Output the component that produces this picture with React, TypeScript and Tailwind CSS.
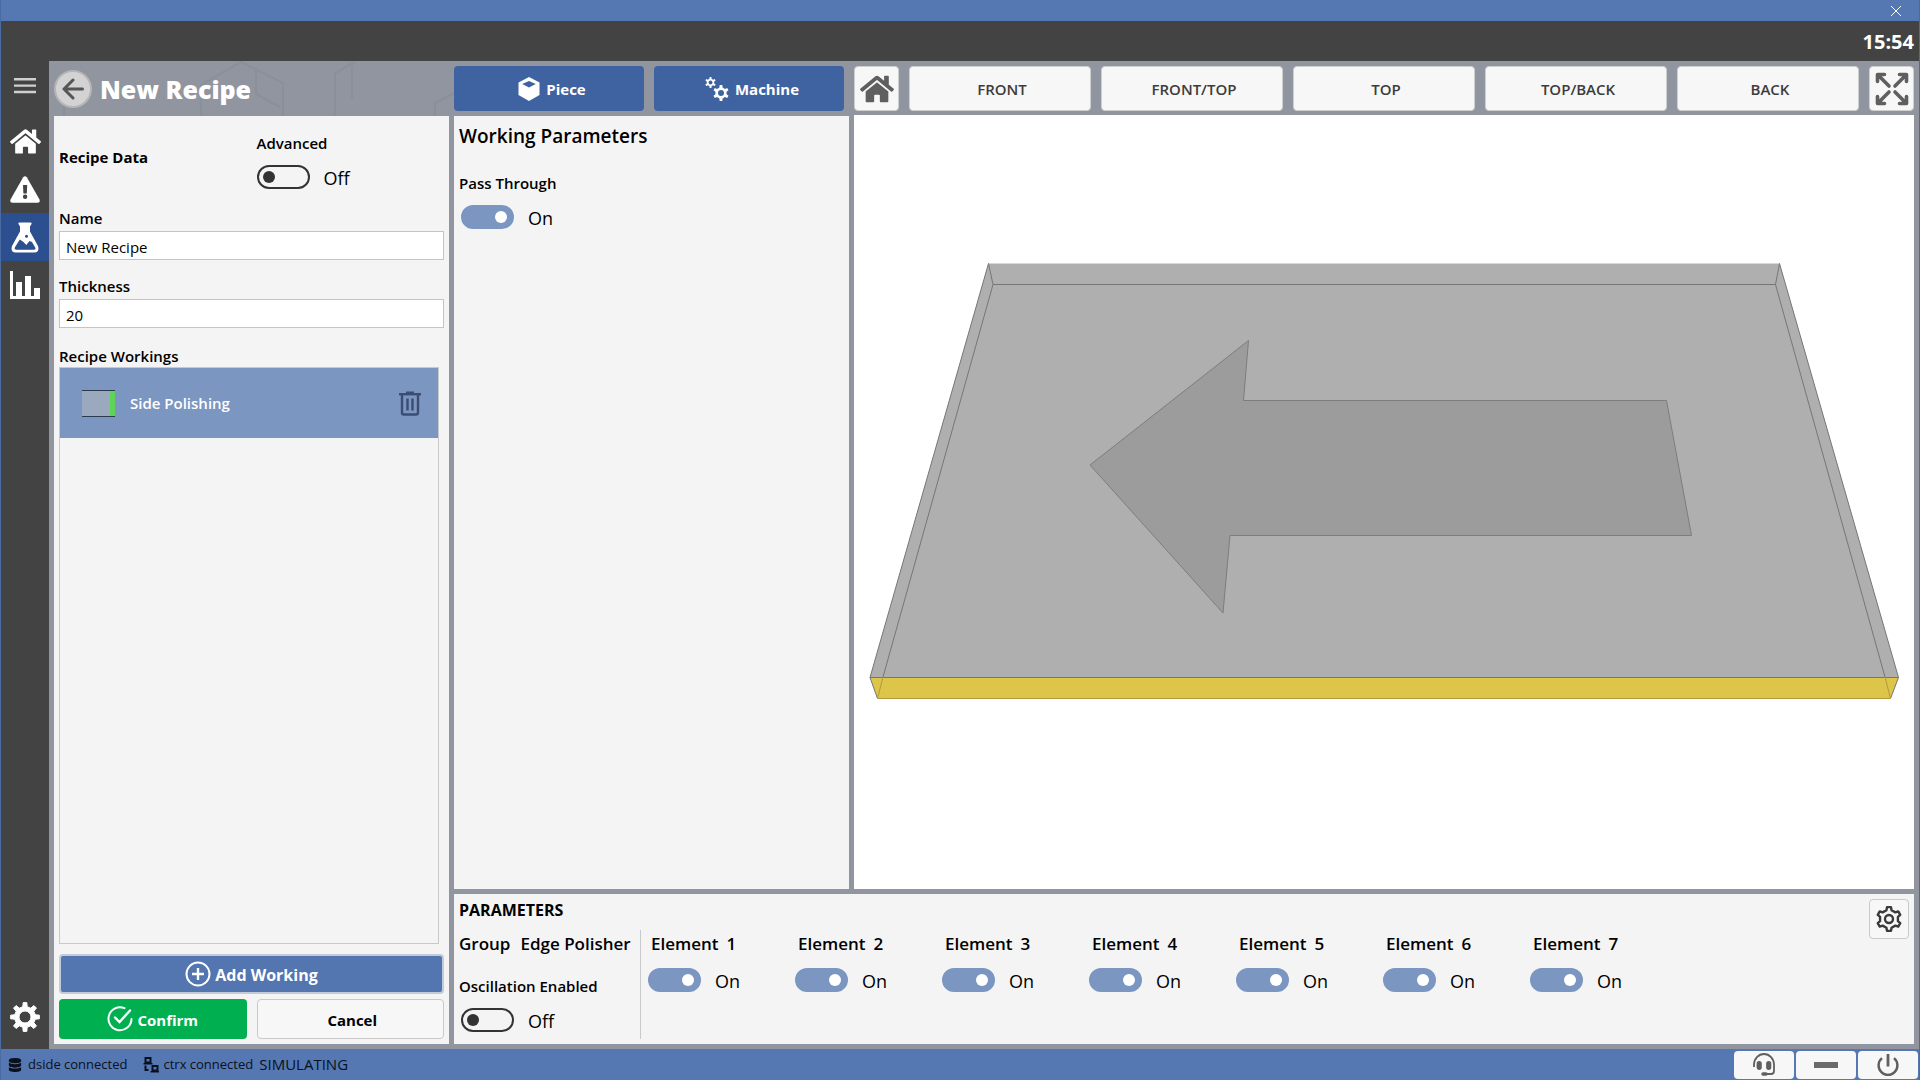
import type { ReactNode } from 'react'
import { FaDatabase, FaHome } from 'react-icons/fa'

const VIEWS = ['FRONT', 'FRONT/TOP', 'TOP', 'TOP/BACK', 'BACK']
const ELEMENTS = [1, 2, 3, 4, 5, 6, 7]

// Outline of a cog wheel with square teeth, plus its centre hole
function gearPath(
  cx: number,
  cy: number,
  teeth: number,
  outer: number,
  root: number,
  hole: number,
) {
  const step = (Math.PI * 2) / teeth
  const at = (r: number, a: number) =>
    `${(cx + r * Math.sin(a)).toFixed(2)} ${(cy - r * Math.cos(a)).toFixed(2)}`
  const points: string[] = []
  for (let i = 0; i < teeth; i++) {
    const a = i * step
    points.push(
      at(root, a - step * 0.27),
      at(outer, a - step * 0.16),
      at(outer, a + step * 0.16),
      at(root, a + step * 0.27),
    )
  }
  const ring = hole
    ? `M${cx - hole} ${cy}a${hole} ${hole} 0 1 0 ${hole * 2} 0a${hole} ${hole} 0 1 0 ${-hole * 2} 0Z`
    : ''
  return `M${points.join('L')}Z${ring}`
}

function MenuIcon() {
  return (
    <svg viewBox="0 0 22 16" className="h-4 w-[22px]" fill="#d0d0d0">
      <path d="M0 0h22v2.4H0zM0 6.4h22v2.4H0zM0 12.8h22v2.4H0z" />
    </svg>
  )
}

function AlertIcon() {
  return (
    <svg viewBox="0 0 30 27" className="h-[27px] w-[30px]">
      <path
        d="M13.2 1.2q1.8-2 3.6 0L29.5 23.5q1 3-1.8 3.3H2.3q-2.8-.3-1.8-3.3z"
        fill="#fff"
      />
      <path d="M13 9h4.2l-.4 8.5h-3.4z" fill="#434343" />
      <circle cx="15.1" cy="20.8" r="2.2" fill="#434343" />
    </svg>
  )
}

function FlaskIcon() {
  return (
    <svg viewBox="0 0 28 31" className="h-[31px] w-7">
      <path
        d="M8.5.5h11q1.5 0 1 1.6l-1.5 2.4v5l8 14.5q1.8 6-3.5 6.5h-19q-5.3-.5-3.5-6.5l8-14.500v-5L7.500 2.100q-.5-1.600 1-1.600z"
        fill="#fff"
      />
      <path
        d="M8.800 17.500l3.700 2.500 2.800 3 3.200-4 2.500 1 3.500 6q.5 1.800-1.500 1.800H5q-2-.2-1.200-2.300z"
        fill="#2b4f8f"
      />
      <circle cx="15.5" cy="14.2" r="1.5" fill="#2b4f8f" />
    </svg>
  )
}

function ChartIcon() {
  return (
    <svg viewBox="0 0 30 28" className="h-7 w-[30px]" fill="#fff">
      <path d="M0 0h3v25h3V11h6v14h3V5h6v20h3v-8h6v11H0z" />
    </svg>
  )
}

function GearIcon() {
  return (
    <svg viewBox="0 0 30 30" className="size-[30px]">
      <path
        d={gearPath(15, 15, 8, 14.5, 10.5, 6)}
        fill="#fff"
        stroke="#fff"
        strokeWidth="1"
        strokeLinejoin="round"
        fillRule="evenodd"
      />
    </svg>
  )
}

function BackIcon() {
  return (
    <svg
      viewBox="0 0 22 22"
      className="size-[22px]"
      fill="none"
      stroke="#555"
      strokeWidth="3"
      strokeLinecap="round"
      strokeLinejoin="round"
    >
      <path d="M20.5 11H2M11 2L2 11l9 9" />
    </svg>
  )
}

function CubeIcon() {
  return (
    <svg viewBox="0 0 22 24" className="h-6 w-[22px]" fill="#fff" fillRule="evenodd">
      <path d="M11 0L21.5 5.6V18L11 24 .5 18V5.6zM11 4L4.2 7 11 10.4 17.8 7z" />
    </svg>
  )
}

function GearsIcon() {
  return (
    <svg viewBox="0 0 24 24" className="size-6" fill="#fff" fillRule="evenodd">
      <path d={gearPath(5.5, 5.5, 6, 5.5, 3.8, 2)} />
      <path d={gearPath(16, 16, 6, 8, 5.7, 3)} />
    </svg>
  )
}

function ExpandIcon() {
  return (
    <svg
      viewBox="0 0 34 34"
      className="size-[34px]"
      fill="none"
      stroke="#5f5f5f"
      strokeWidth="3.6"
      strokeLinecap="round"
      strokeLinejoin="round"
    >
      <path d="M14 14L3 3M2.5 9.5v-7h7M20 14L31 3M24.5 2.5h7v7M14 20L3 31M2.5 24.5v7h7M20 20l11 11M24.5 31.5h7v-7" />
    </svg>
  )
}

function TrashIcon() {
  return (
    <svg
      viewBox="0 0 22 25"
      className="h-[25px] w-[22px]"
      fill="none"
      stroke="#3b4d70"
      strokeWidth="2.4"
    >
      <path d="M3 4v17.5q0 2 2 2h12q2 0 2-2V4" />
      <path d="M0 3.2h22" />
      <path d="M7 1.7h8M8.5 7.5v12M13.5 7.5v12" />
    </svg>
  )
}

function PlusCircleIcon() {
  return (
    <svg viewBox="0 0 26 26" className="size-[26px]" fill="none" stroke="#fff" strokeWidth="2">
      <circle cx="13" cy="13" r="11.5" />
      <path d="M13 7v12M7 13h12" strokeWidth="2.4" />
    </svg>
  )
}

function CheckCircleIcon() {
  return (
    <svg
      viewBox="0 0 26 26"
      className="size-[26px]"
      fill="none"
      stroke="#fff"
      strokeWidth="2"
      strokeLinecap="round"
    >
      <path d="M17.5 2.2A11.5 11.5 0 1 0 24.5 13" />
      <path d="M8 11.5l4.5 4.5L23 4.5" strokeWidth="2.4" />
    </svg>
  )
}

function NetworkIcon() {
  return (
    <svg viewBox="0 0 16 16" className="size-4" fill="none" stroke="#0b1020" strokeWidth="2">
      <path d="M2.5 1h5v4.5h-5zM9.5 9h5v4.5h-5z" />
      <path d="M.5 6.8h9M7.5 14.8h8.5" strokeWidth="1.6" />
      <path d="M2.5 8.5v4.5h3" />
    </svg>
  )
}

function SettingsIcon() {
  return (
    <svg
      viewBox="0 0 28 28"
      className="size-7"
      fill="none"
      stroke="#3a3a3a"
      strokeWidth="2.4"
      strokeLinejoin="round"
    >
      <path d={gearPath(14, 14, 6, 12, 9.2, 0)} />
      <circle cx="14" cy="14" r="4" />
    </svg>
  )
}

function HeadsetIcon() {
  return (
    <svg viewBox="0 0 24 24" className="size-6" fill="none" stroke="#5f5f5f" strokeWidth="1.8">
      <path d="M2 14V11.5a10 10.5 0 0 1 20 0V18q0 3-3 3h-5" />
      <path d="M11 21h3" strokeWidth="3.4" strokeLinecap="round" />
      <rect x="5.5" y="9" width="3.4" height="7" rx="1.7" fill="#5f5f5f" />
      <rect x="15" y="9" width="3.4" height="7" rx="1.7" fill="#5f5f5f" />
    </svg>
  )
}

function PowerIcon() {
  return (
    <svg viewBox="0 0 24 24" className="size-6" fill="none" stroke="#5f5f5f" strokeWidth="2.4">
      <path d="M6 5.2A9.4 9.4 0 1 0 18 5.2" />
      <path d="M12 1v12.5" strokeWidth="2.8" />
    </svg>
  )
}

function Toggle({ id, on = false }: { id: string; on?: boolean }) {
  return (
    <div className="flex h-6 items-center gap-[14px]">
      <input
        id={id}
        type="checkbox"
        defaultChecked={on}
        className="relative h-6 w-[53px] shrink-0 appearance-none rounded-full border-2 border-[#333] before:absolute before:top-1 before:left-1 before:size-3 before:rounded-full before:bg-[#333] checked:border-[#7b96c1] checked:bg-[#7b96c1] checked:before:left-8 checked:before:bg-white"
      />
      <span className="pt-[2px] text-lg leading-6 text-black">{on ? 'On' : 'Off'}</span>
    </div>
  )
}

function ViewButton({ label, children }: { label?: string; children: ReactNode }) {
  return (
    <button
      type="button"
      aria-label={label}
      className="flex h-[45px] w-full items-center justify-center rounded border border-[#cfcfd2] bg-[#f7f7f7] text-[15px] font-semibold text-[#3c3c3c]"
    >
      {children}
    </button>
  )
}

function Sidebar() {
  return (
    <nav className="flex w-12 shrink-0 flex-col items-center bg-[#434343]">
      <button type="button" aria-label="Menu" className="grid h-[50px] w-full place-items-center">
        <MenuIcon />
      </button>
      <a href="#home" aria-label="Home" className="mt-[6px] grid h-12 w-full place-items-center">
        <FaHome className="size-[31px] text-white" />
      </a>
      <a href="#alarms" aria-label="Alarms" className="grid h-12 w-full place-items-center">
        <AlertIcon />
      </a>
      <a
        href="#recipes"
        aria-label="Recipes"
        className="grid h-12 w-full place-items-center bg-[#2b4f8f]"
      >
        <FlaskIcon />
      </a>
      <a href="#stats" aria-label="Statistics" className="grid h-12 w-full place-items-center">
        <ChartIcon />
      </a>
      <a
        href="#settings"
        aria-label="Settings"
        className="mt-auto mb-2 grid h-12 w-full place-items-center"
      >
        <GearIcon />
      </a>
    </nav>
  )
}

function RecipePanel() {
  return (
    <form className="flex min-h-0 flex-1 flex-col bg-[#f4f4f4] p-[5px] text-[15px] leading-[22px]">
      <div className="grid grid-cols-2 pt-[11px]">
        <h2 className="pt-[14px] font-bold">Recipe Data</h2>
        <div className="pl-[5px]">
          <label htmlFor="advanced" className="mb-[11px] block font-semibold">
            Advanced
          </label>
          <Toggle id="advanced" />
        </div>
      </div>

      <label htmlFor="name" className="mt-[18px] mb-[2px] font-semibold">
        Name
      </label>
      <input
        id="name"
        defaultValue="New Recipe"
        className="h-[29px] border border-[#c4c4c4] bg-white px-[6px] pt-[2px]"
      />
      <label htmlFor="thickness" className="mt-[15px] mb-[2px] font-semibold">
        Thickness
      </label>
      <input
        id="thickness"
        defaultValue="20"
        className="h-[29px] border border-[#c4c4c4] bg-white px-[6px] pt-[2px]"
      />

      <h3 className="mt-[17px] font-semibold">Recipe Workings</h3>
      <ul className="mr-[5px] flex-1 border border-[#c9c9c9]">
        <li className="flex h-[70px] items-center bg-[#7b96c1] pr-[17px] pl-[22px] text-white">
          <svg viewBox="0 0 33 27" className="h-[27px] w-[33px]">
            <path d="M0 0h33v27H0z" fill="#9ba9bf" />
            <path d="M28 0h5v27h-5z" fill="#5fd35a" />
            <path d="M0 .5h33M0 26.5h33" stroke="#2b3a4d" />
          </svg>
          <span className="ml-[15px] font-semibold">Side Polishing</span>
          <button type="button" aria-label="Delete working" className="ml-auto">
            <TrashIcon />
          </button>
        </li>
      </ul>

      <button
        type="button"
        className="mt-[10px] flex h-10 items-center justify-center gap-1 rounded border-2 border-[#c3cad8] bg-[#5375b0] text-base font-bold text-white"
      >
        <PlusCircleIcon />
        <span className="pt-[2px]">Add Working</span>
      </button>
      <div className="mt-[5px] grid grid-cols-2 gap-[10px]">
        <button
          type="submit"
          className="flex h-10 items-center justify-center gap-1 rounded bg-[#00b050] font-bold text-white"
        >
          <CheckCircleIcon />
          <span className="pt-[2px]">Confirm</span>
        </button>
        <button
          type="button"
          className="h-10 rounded border border-[#c9c9c9] bg-[#f7f7f7] pt-[2px] pl-1 font-bold"
        >
          Cancel
        </button>
      </div>
    </form>
  )
}

function PieceView() {
  return (
    <div className="relative min-h-0 flex-1 bg-white">
      <svg viewBox="854 115 1060 774" className="absolute inset-0 size-full">
        <path d="M988.5 263.5H1779.5L1898.5 677.5H870z" fill="#afafaf" />
        <path d="M870 677.5H1898.5L1890.5 698.5H877.5z" fill="#dcc549" />
        <path
          d="M988.5 263.5L870 677.5L877.5 698.5M988.5 263.5L993 284.5L883 677M1779.5 263.5L1898.5 677.5L1890.5 698.5M1779.5 263.5L1775.5 284.5L1885 677M993 284.5H1775.5M870 677.5H1898.5"
          fill="none"
          stroke="#767676"
        />
        <path d="M883 677L877.5 698.5H1890.5L1885 677" fill="none" stroke="#b39a3f" />
        <path
          d="M1090 465L1248.5 340.5L1243.5 400.5H1666.5L1691.5 535.5H1230L1223 613z"
          fill="#9c9c9c"
          stroke="#7d7d7d"
        />
      </svg>
    </div>
  )
}

function ParametersPanel() {
  return (
    <section className="flex h-[150px] items-start justify-between bg-[#f4f4f4] p-[5px]">
      <div>
        <h2 className="text-base leading-[22px] font-bold">PARAMETERS</h2>
        <div className="mt-[9px] flex">
          <div className="h-[109px] w-[182px] border-r border-[#c9c9c9]">
            <p className="flex gap-[10px] pt-[2px] text-[17px] leading-6 font-semibold whitespace-nowrap">
              <span>Group</span>
              <span>Edge Polisher</span>
            </p>
            <label
              htmlFor="oscillation"
              className="mt-[19px] mb-[11px] block text-[15px] leading-[22px] font-semibold"
            >
              Oscillation Enabled
            </label>
            <div className="pl-[2px]">
              <Toggle id="oscillation" />
            </div>
          </div>
          <div className="flex pl-[7px]">
            {ELEMENTS.map((n) => (
              <div key={n} className="w-[147px]">
                <label
                  htmlFor={`element-${n}`}
                  className="mb-3 flex gap-2 pt-[2px] pl-[3px] text-[17px] leading-6 font-semibold"
                >
                  <span>Element</span>
                  <span>{n}</span>
                </label>
                <Toggle id={`element-${n}`} on />
              </div>
            ))}
          </div>
        </div>
      </div>
      <button
        type="button"
        aria-label="Parameter settings"
        className="grid size-10 place-items-center rounded border border-[#c9c9c9] bg-[#f7f7f7]"
      >
        <SettingsIcon />
      </button>
    </section>
  )
}

export default function App() {
  return (
    <div className="flex h-screen flex-col border-x border-[#4a6aa3] bg-[#5578b3] font-['Open_Sans','Noto_Sans',sans-serif] text-black">
      {/* Window title bar */}
      <div className="flex h-[21px] shrink-0 items-center justify-end pr-[18px]">
        <button type="button" aria-label="Close">
          <svg viewBox="0 0 10 10" className="size-[10px]" stroke="#fff" fill="none">
            <path d="M0 0l10 10M10 0L0 10" />
          </svg>
        </button>
      </div>
      <header className="flex h-10 shrink-0 items-center justify-end bg-[#434343] pt-[2px] pr-[5px]">
        <time className="text-xl font-bold text-white">15:54</time>
      </header>

      <div className="flex min-h-0 flex-1">
        <Sidebar />
        <main className="relative flex min-w-0 flex-1 gap-[5px] bg-[#9095a0] px-[5px] pb-[5px]">
          {/* Faint hexagon backdrop */}
          <svg
            viewBox="0 0 405 55"
            className="absolute top-0 left-0 h-[55px] w-[405px]"
            fill="none"
            stroke="#8a8f9a"
            strokeWidth="2"
          >
            <path d="M152 55V24L192 1l42 21v33M207 7v26l24 13M286 55V12l20-11M303 6v32M386 55V42l19-10M15 55V38" />
          </svg>

          <div className="relative flex w-[395px] shrink-0 flex-col">
            <div className="flex h-[55px] items-center gap-2">
              <button
                type="button"
                aria-label="Back"
                className="grid size-[38px] place-items-center rounded-full border-2 border-[#b5b5b5] bg-[#d3d3d3]"
              >
                <BackIcon />
              </button>
              <h1 className="pt-[2px] text-[25px] font-extrabold text-white">New Recipe</h1>
            </div>
            <RecipePanel />
          </div>

          <div className="relative flex min-w-0 flex-1 flex-col gap-[5px]">
            <div className="flex min-h-0 flex-1 gap-[5px]">
              <div className="flex w-[395px] shrink-0 flex-col">
                <div className="grid h-[55px] grid-cols-2 items-center gap-[10px] pr-[5px]">
                  <button
                    type="button"
                    className="flex h-[45px] items-center justify-center gap-[6px] rounded bg-[#3f63a0] pl-[6px] text-[15px] font-bold text-white"
                  >
                    <CubeIcon />
                    <span className="pt-px">Piece</span>
                  </button>
                  <button
                    type="button"
                    className="flex h-[45px] items-center justify-center gap-[6px] rounded bg-[#3f63a0] pl-[6px] text-[15px] font-bold text-white"
                  >
                    <GearsIcon />
                    <span className="pt-px">Machine</span>
                  </button>
                </div>
                <section className="flex-1 bg-[#f4f4f4] p-[5px]">
                  <h2 className="text-[19px] leading-[30px] font-semibold">Working Parameters</h2>
                  <label
                    htmlFor="pass-through"
                    className="mt-[21px] mb-[11px] block text-[15px] leading-[22px] font-semibold"
                  >
                    Pass Through
                  </label>
                  <div className="pl-[2px]">
                    <Toggle id="pass-through" on />
                  </div>
                </section>
              </div>

              <div className="flex min-w-0 flex-1 flex-col">
                <div className="grid grid-cols-[45px_repeat(5,1fr)_45px] gap-[10px] pt-[5px] pb-1">
                  <ViewButton label="Home view">
                    <FaHome className="size-[34px] shrink-0 text-[#5f5f5f]" />
                  </ViewButton>
                  {VIEWS.map((view) => (
                    <ViewButton key={view}>
                      <span className="pt-px pl-1">{view}</span>
                    </ViewButton>
                  ))}
                  <ViewButton label="Fit to screen">
                    <ExpandIcon />
                  </ViewButton>
                </div>
                <PieceView />
              </div>
            </div>
            <ParametersPanel />
          </div>
        </main>
      </div>

      <footer className="flex h-[31px] shrink-0 items-center text-[13px] text-[#0b1020]">
        <FaDatabase className="ml-[7px] size-[14px]" />
        <span className="ml-[6px]">dside connected</span>
        <span className="ml-4">
          <NetworkIcon />
        </span>
        <span className="ml-1">ctrx connected</span>
        <span className="ml-[6px] text-[15px]">SIMULATING</span>
        <div className="ml-auto flex gap-[2px] pr-px">
          <button
            type="button"
            aria-label="Support"
            className="grid h-7 w-[60px] place-items-center rounded bg-[#f7f7f7]"
          >
            <HeadsetIcon />
          </button>
          <button
            type="button"
            aria-label="Minimize"
            className="grid h-7 w-[60px] place-items-center rounded bg-[#f7f7f7]"
          >
            <span className="h-[6px] w-6 bg-[#6a6a6a]" />
          </button>
          <button
            type="button"
            aria-label="Power"
            className="grid h-7 w-[60px] place-items-center rounded bg-[#f7f7f7]"
          >
            <PowerIcon />
          </button>
        </div>
      </footer>
    </div>
  )
}
